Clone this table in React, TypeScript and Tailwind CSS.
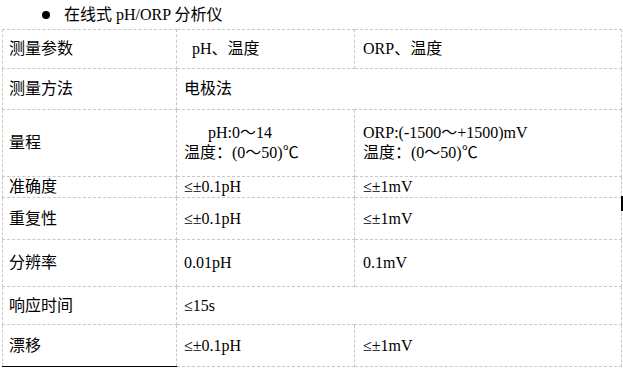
const font = "font-['Liberation_Serif','Noto_Sans_CJK_SC',serif]";

const cell = "border border-dashed border-[#c8c8c8] align-middle p-0";

type Row = {
  h: string;
  label: string;
  a: React.ReactNode;
  b?: React.ReactNode;
  last?: boolean;
};

const rows: Row[] = [
  { h: "h-[39px]", label: "测量参数", a: <span className="pl-[8px]">pH、温度</span>, b: "ORP、温度" },
  { h: "h-[41px]", label: "测量方法", a: "电极法" },
  {
    h: "h-[67px]",
    label: "量程",
    a: (
      <div className="leading-[20px]">
        <div className="pl-[24px]">pH:0～14</div>
        <div>温度：(0～50)℃</div>
      </div>
    ),
    b: (
      <div className="leading-[20px]">
        <div>ORP:(-1500～+1500)mV</div>
        <div>温度：(0～50)℃</div>
      </div>
    ),
  },
  { h: "h-[21px]", label: "准确度", a: "≤±0.1pH", b: "≤±1mV" },
  { h: "h-[42px]", label: "重复性", a: "≤±0.1pH", b: "≤±1mV" },
  { h: "h-[47px]", label: "分辨率", a: "0.01pH", b: "0.1mV" },
  { h: "h-[38px]", label: "响应时间", a: "≤15s" },
  { h: "h-[42px]", label: "漂移", a: "≤±0.1pH", b: "≤±1mV", last: true },
];

export default function App() {
  return (
    <div className={`relative w-[623px] h-[368px] bg-white text-black text-[16px] ${font}`}>
      {/* heading */}
      <div className="h-[29px] flex items-center pl-[42px] leading-none">
        <span className="w-[8px] h-[8px] rounded-full bg-black mr-[14px]" />
        <span>在线式 pH/ORP 分析仪</span>
      </div>

      <table className="ml-[2px] border-collapse table-fixed w-[619px]">
        <colgroup>
          <col className="w-[174px]" />
          <col className="w-[178px]" />
          <col className="w-[267px]" />
        </colgroup>
        <tbody>
          {rows.map((r) => (
            <tr key={r.label} className={r.h}>
              <td
                className={`${cell} pl-[6px] leading-[18px] ${r.last ? "border-b-black" : ""}`}
                style={r.last ? { borderBottomStyle: "solid" } : undefined}
              >
                {r.label}
              </td>
              {r.b === undefined ? (
                <td className={`${cell} pl-[7px] leading-[18px]`} colSpan={2}>
                  {r.a}
                </td>
              ) : (
                <>
                  <td className={`${cell} pl-[7px] leading-[18px]`}>{r.a}</td>
                  <td className={`${cell} pl-[8px] leading-[18px]`}>{r.b}</td>
                </>
              )}
            </tr>
          ))}
        </tbody>
      </table>

      {/* stray caret mark at the right edge */}
      <div className="absolute left-[621px] top-[196px] w-[2px] h-[15px] bg-black" />
    </div>
  );
}
